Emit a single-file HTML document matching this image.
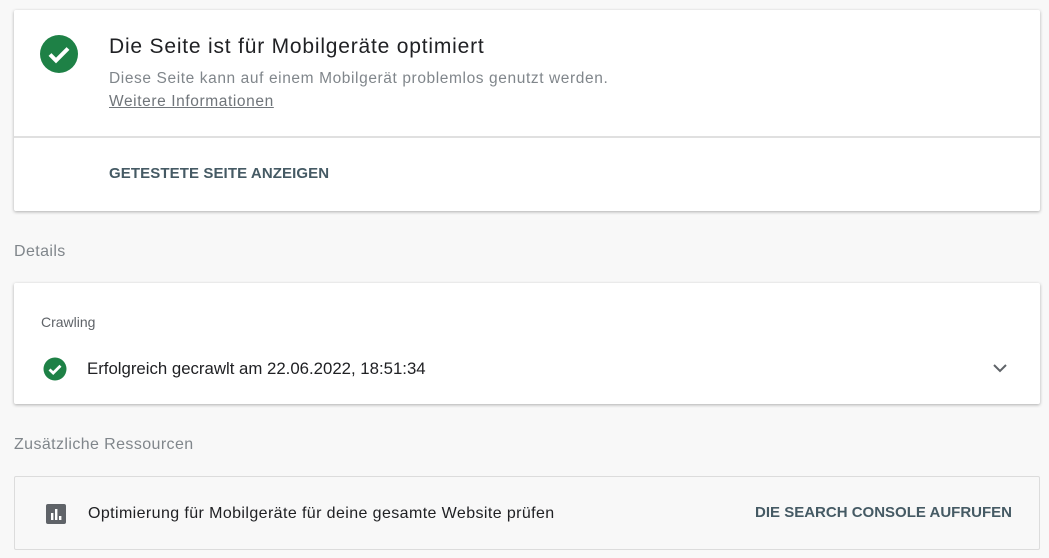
<!DOCTYPE html>
<html><head><meta charset="utf-8"><style>
body{margin:0;width:1049px;height:558px;background:#f8f8f8;font-family:"Liberation Sans",sans-serif;position:relative;overflow:hidden}
.card{position:absolute;left:14px;width:1026px;background:#fff;border-radius:2px;box-shadow:0 1px 3px rgba(0,0,0,.3)}
.t{position:absolute;white-space:nowrap}
</style></head><body>
<div class="card" style="top:10px;height:201px">
  <svg class="t" style="left:26px;top:25px" width="38" height="38" viewBox="0 0 38 38"><circle cx="19" cy="19" r="19" fill="#1e8146"/><path d="M10 19.5l6 6 12-12" stroke="#fff" stroke-width="4" fill="none"/></svg>
  <div class="t" style="left:95px;top:25px;font-size:21px;color:#202124;letter-spacing:0.8px">Die Seite ist für Mobilgeräte optimiert</div>
  <div class="t" style="left:95px;top:60px;font-size:15.5px;color:#80868b;letter-spacing:0.6px">Diese Seite kann auf einem Mobilgerät problemlos genutzt werden.</div>
  <div class="t" style="left:95px;top:83px;font-size:15.5px;color:#70757a;text-decoration:underline;letter-spacing:0.6px">Weitere Informationen</div>
  <div style="position:absolute;left:0;right:0;top:126px;height:2px;background:#e0e0e0"></div>
  <div class="t" style="left:95px;top:155px;font-size:15px;font-weight:bold;color:#455a64;letter-spacing:0.1px">GETESTETE SEITE ANZEIGEN</div>
</div>
<div class="t" style="left:14px;top:243px;font-size:16px;color:#80868b;letter-spacing:0.4px">Details</div>
<div class="card" style="top:283px;height:121px">
  <div class="t" style="left:27px;top:31px;font-size:14px;color:#5f6368">Crawling</div>
  <svg class="t" style="left:29px;top:74px" width="24" height="24" viewBox="0 0 24 24"><circle cx="12" cy="12" r="11.5" fill="#1e8146"/><path d="M6.5 12.5l3.7 3.5 7.3-7.3" stroke="#fff" stroke-width="2.8" fill="none"/></svg>
  <div class="t" style="left:73px;top:76px;font-size:16.8px;color:#202124">Erfolgreich gecrawlt am 22.06.2022, 18:51:34</div>
  <svg class="t" style="left:978px;top:79px" width="16" height="12" viewBox="0 0 16 12"><path d="M2 3l6 6 6-6" stroke="#5f6368" stroke-width="2" fill="none"/></svg>
</div>
<div class="t" style="left:14px;top:436px;font-size:16px;color:#80868b;letter-spacing:0.4px">Zusätzliche Ressourcen</div>
<div style="position:absolute;left:14px;top:476px;width:1024px;height:72px;border:1px solid #dcdcdc;border-radius:2px">
  <svg class="t" style="left:31px;top:27px" width="20" height="20" viewBox="0 0 20 20"><rect width="20" height="20" rx="2" fill="#5f6368"/><rect x="5" y="9" width="2.4" height="7" fill="#fff"/><rect x="9" y="5" width="2.4" height="11" fill="#fff"/><rect x="13" y="12" width="2.4" height="4" fill="#fff"/></svg>
  <div class="t" style="left:73px;top:28px;font-size:16px;color:#202124;letter-spacing:0.4px">Optimierung für Mobilgeräte für deine gesamte Website prüfen</div>
  <div class="t" style="right:27px;top:27px;font-size:15px;font-weight:bold;color:#455a64;letter-spacing:0px">DIE SEARCH CONSOLE AUFRUFEN</div>
</div>
</body></html>
